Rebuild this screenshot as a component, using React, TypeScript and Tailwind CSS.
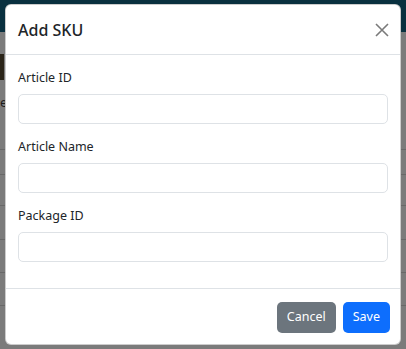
import React from 'react';

const fields = ['Article ID', 'Article Name', 'Package ID'];

function BackgroundPage() {
  return (
    <div className="w-[406px] h-[349px] bg-[#7b7b7b] overflow-hidden">
      <div className="h-[32px] bg-[#09303f]" />
      <div className="h-[24px] flex">
        <div className="mt-[22px] w-[4px] h-[26px] bg-[#2a2418]" />
      </div>
      <div className="pt-[40px] pl-0 text-[13px] text-[#1b1b1b] leading-none">er</div>
      <div className="mt-[40px] border-t border-[#686868]" />
      <div className="mt-[24px] border-t border-[#686868]" />
      <div className="mt-[30px] border-t border-[#686868]" />
      <div className="mt-[33px] border-t border-[#686868]" />
      <div className="mt-[32px] border-t border-[#686868]" />
      <div className="mt-[32px] border-t border-[#686868]" />
    </div>
  );
}

export default function App() {
  return (
    <div
      className="relative w-[406px] h-[349px] overflow-hidden"
      style={{ fontFamily: '"Noto Sans", "Open Sans", sans-serif' }}
    >
      <BackgroundPage />
      <div className="absolute left-[5px] top-[4px] w-[396px] h-[341px] bg-white rounded-[6px] border border-black/20 flex flex-col">
        <div className="h-[50px] flex items-center justify-between pl-[12px] pr-[11px] border-b border-[#dee2e6]">
          <h5 className="text-[16px] font-medium text-[#212529] leading-none">Add SKU</h5>
          <button className="w-[14px] h-[14px] flex items-center justify-center">
            <svg width="14" height="14" viewBox="0 0 14 14">
              <path d="M1 1L13 13M13 1L1 13" stroke="#7a7a7a" strokeWidth="1.6" />
            </svg>
          </button>
        </div>
        <div className="px-[12px] pt-[13px] pb-[0px] h-[234px] border-b border-[#dee2e6]">
          {fields.map((f) => (
            <div key={f} className="mb-[13px]">
              <label className="block text-[12.5px] leading-[19px] text-[#212529] mb-[7px]">{f}</label>
              <input
                type="text"
                className="block w-full h-[30px] rounded-[5px] border border-[#dee2e6] bg-white outline-none"
              />
            </div>
          ))}
        </div>
        <div className="flex-1 flex items-start justify-end gap-[7px] pt-[13px] pr-[10px]">
          <button className="h-[31px] px-[10px] rounded-[5px] bg-[#6c757d] text-white text-[12.5px]">Cancel</button>
          <button className="h-[31px] px-[10px] rounded-[5px] bg-[#0d6efd] text-white text-[12.5px]">Save</button>
        </div>
      </div>
    </div>
  );
}
